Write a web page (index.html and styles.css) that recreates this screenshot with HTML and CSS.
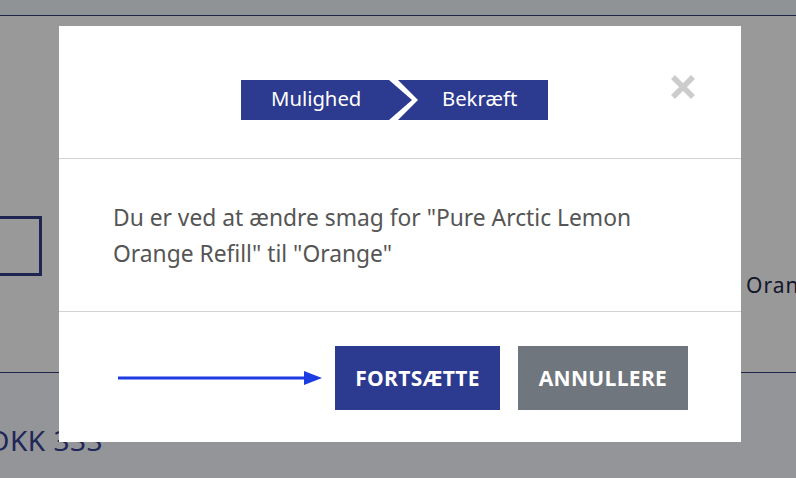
FILE: index.html
```html
<!DOCTYPE html>
<html lang="da">
<head>
<meta charset="utf-8">
<title>Bekræft ændring</title>
<link rel="stylesheet" href="styles.css">
</head>
<body>
<div class="page">
  <div class="topbar"></div>
  <div class="main">
    <div class="main-row">
      <div class="qty-box"></div>
      <div class="flavour">Orange</div>
    </div>
  </div>
  <div class="pricebar">
    <div class="price">DKK 333</div>
  </div>
</div>

<div class="overlay">
  <div class="modal">
    <div class="modal-header">
      <div class="steps">
        <div class="step step-first">Mulighed</div>
        <div class="step step-second">Bekræft</div>
      </div>
      <button class="close" aria-label="Luk">
        <svg width="26" height="26" viewBox="0 0 26 26"><path d="M3 3 L23 23 M23 3 L3 23" stroke="#cccccc" stroke-width="5.5" fill="none"/></svg>
      </button>
    </div>
    <div class="modal-body">
      <p class="message">Du er ved at ændre smag for "Pure Arctic Lemon Orange Refill" til "Orange"</p>
    </div>
    <div class="modal-footer">
      <div class="pointer">
        <svg width="204" height="16" viewBox="0 0 204 16"><line x1="0" y1="8" x2="188" y2="8" stroke="#1c3be2" stroke-width="3.2"/><polygon points="186,1 204,8 186,15" fill="#1c3be2"/></svg>
      </div>
      <button class="btn btn-primary">FORTSÆTTE</button>
      <button class="btn btn-secondary">ANNULLERE</button>
    </div>
  </div>
</div>
</body>
</html>
```
FILE: styles.css
```css
* { box-sizing: border-box; }
html, body { margin: 0; padding: 0; }
body {
  width: 796px;
  height: 478px;
  overflow: hidden;
  font-family: "Noto Sans", "Open Sans", sans-serif;
  background: #939598;
}
.page {
  display: flex;
  flex-direction: column;
  height: 478px;
}
.topbar {
  height: 16px;
  background: #909396;
  border-bottom: 1px solid #1f2448;
}
.main {
  height: 357px;
  background: #999999;
  border-bottom: 1px solid #1f2448;
  padding-top: 200px;
}
.main-row {
  display: flex;
  align-items: flex-start;
}
.qty-box {
  width: 62px;
  height: 60px;
  margin-left: -20px;
  border: 3.5px solid #1e2550;
  flex: none;
}
.flavour {
  margin-left: 704px;
  margin-top: 57px;
  font-size: 21px;
  line-height: 24px;
  letter-spacing: 1px;
  color: #13162a;
  white-space: nowrap;
}
.pricebar {
  flex: 1;
  background: #939598;
  padding-top: 50px;
}
.price {
  margin-left: -11px;
  font-size: 28px;
  line-height: 34px;
  letter-spacing: 0.5px;
  color: #1f2658;
  white-space: nowrap;
}

.overlay {
  position: fixed;
  inset: 0;
  display: flex;
  justify-content: center;
  align-items: flex-start;
  padding-top: 26px;
  padding-left: 4px;
}
.modal {
  width: 682px;
  height: 416px;
  background: #ffffff;
  display: flex;
  flex-direction: column;
}
.modal-header {
  position: relative;
  height: 133px;
  border-bottom: 1px solid #d2d2d2;
  display: flex;
  justify-content: center;
  padding-top: 54px;
  padding-right: 11px;
}
.steps {
  display: flex;
  height: 40px;
}
.step {
  height: 40px;
  background: #2c3a8f;
  color: #ffffff;
  font-size: 20.3px;
  line-height: 36px;
  white-space: nowrap;
}
.step-first {
  width: 171px;
  padding-left: 30px;
  clip-path: polygon(0 0, 148px 0, 100% 50%, 148px 100%, 0 100%);
}
.step-second {
  width: 150px;
  margin-left: -14px;
  padding-left: 44px;
  clip-path: polygon(0 0, 100% 0, 100% 100%, 0 100%, 20px 50%);
}
.close {
  position: absolute;
  top: 48px;
  right: 45px;
  width: 26px;
  height: 26px;
  padding: 0;
  border: 0;
  background: none;
  display: block;
}
.close svg { display: block; }
.modal-body {
  height: 153px;
  border-bottom: 1px solid #d2d2d2;
  padding: 41px 54px 0 54px;
}
.message {
  margin: 0;
  font-size: 22.8px;
  line-height: 36px;
  color: #555555;
}
.modal-footer {
  flex: 1;
  display: flex;
  justify-content: flex-end;
  align-items: flex-start;
  padding: 34px 53px 0 0;
}
.pointer {
  width: 204px;
  height: 16px;
  margin-top: 24px;
  margin-right: 13px;
}
.pointer svg { display: block; }
.btn {
  height: 64px;
  border: 0;
  padding: 0;
  color: #ffffff;
  font-family: "Open Sans", sans-serif;
  font-weight: 700;
  font-size: 21px;
  letter-spacing: 0.3px;
}
.btn-primary {
  width: 165px;
  background: #2c3a8f;
}
.btn-secondary {
  width: 170px;
  margin-left: 18px;
  background: #6f767d;
}
```
